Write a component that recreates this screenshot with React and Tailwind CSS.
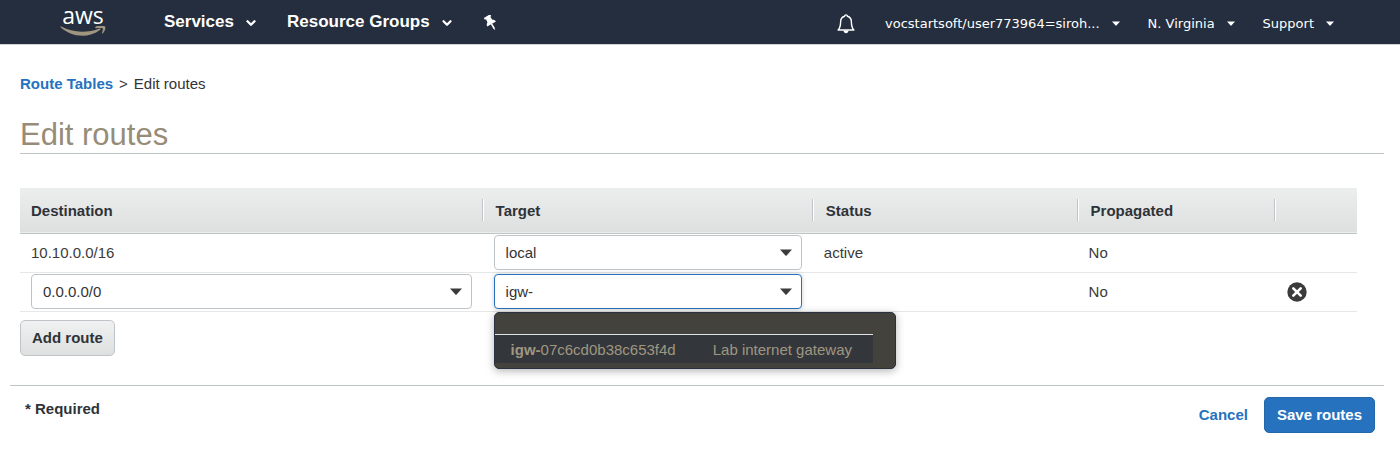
import React, { useState } from "react";
import { ChevronDown } from "lucide-react";

function Caret({ className }) {
  return (
    <svg viewBox="0 0 12 7" className={className} fill="currentColor" aria-hidden="true">
      <path d="M0 .5h12L6.6 6.6a.9.9 0 0 1-1.2 0z" />
    </svg>
  );
}

function Logo() {
  return (
    <a href="#home" aria-label="aws" className="flex w-12 flex-col items-center text-white">
      <span className="font-['Open_Sans','Noto_Sans',sans-serif] text-[23px] leading-4 font-medium">aws</span>
      <svg viewBox="0 0 46 12" className="mt-[3px] h-3 w-12 text-[#a09680]" fill="currentColor" aria-hidden="true">
        <path d="M.6 1.3C.2.900.700.200 1.300.600 7.500 4 14.500 5.800 22 5.800c6 0 12-1.100 17.500-3.200.9-.3 1.500.600.7 1.200C35 7.800 28.500 9.800 22.500 9.800 14 9.800 6.500 6.600.6 1.300z" />
        <path d="M35.600.700C38-.6 43.500-.6 45 .400c1.100 1-.1 5.200-2.400 7-.5.400-1 .1-.7-.5.700-1.500 1.300-3.600.8-4.400-.600-.700-3.800-.5-6.700-.3-.8.100-1.100-1-.4-1.500z" />
      </svg>
    </a>
  );
}

function PrimaryMenu({ children }) {
  return (
    <button type="button" className="flex items-center gap-[10px] text-[17px] leading-5 font-bold">
      {children}
      <ChevronDown size={14} strokeWidth={4} className="mt-[3px]" aria-hidden="true" />
    </button>
  );
}

function SecondaryMenu({ children }) {
  return (
    <button type="button" className="flex items-center gap-3 font-['DejaVu_Sans',sans-serif] text-[13px] leading-5">
      {children}
      <Caret className="h-[5px] w-2" />
    </button>
  );
}

function Header() {
  return (
    <header className="flex h-11 items-center bg-[#242e3e] pr-[66px] pl-[59px] text-white">
      <Logo />
      <nav className="ml-[57px] flex items-center gap-[29px] pb-px">
        <PrimaryMenu>Services</PrimaryMenu>
        <PrimaryMenu>Resource Groups</PrimaryMenu>
        <button type="button" aria-label="Pin shortcuts" className="pt-[3px]">
          <svg viewBox="0 0 16 16" className="size-4" fill="currentColor" aria-hidden="true">
            <g transform="rotate(-30 8 8)">
              <path d="M4.300 0h7.400v2.200h-1.300l.4 3.600c1.400.6 2.200 1.700 2.200 3.400H3c0-1.700.8-2.800 2.200-3.400l.4-3.600H4.300z" />
              <path d="M7.200 9h1.600v4.500L8 16.500l-.8-3z" />
            </g>
          </svg>
        </button>
      </nav>
      <div className="ml-auto flex items-center gap-7 pt-[3px]">
        <button type="button" aria-label="Notifications" className="mr-[2px]">
          <svg viewBox="0 0 18 20" className="h-5 w-[18px]" fill="none" stroke="currentColor" strokeWidth="1.4" strokeLinejoin="round" aria-hidden="true">
            <path d="M7.600 2.300c0-1.900 2.800-1.900 2.800 0 2.700.7 4 2.900 4 5.700 0 4.400.8 6.200 2.500 8H1.100c1.700-1.800 2.500-3.600 2.500-8 0-2.800 1.300-5 4-5.700z" />
            <path d="M6.500 16.500c.2 3.700 4.800 3.700 5 0z" fill="currentColor" stroke="none" />
          </svg>
        </button>
        <SecondaryMenu>vocstartsoft/user773964=siroh...</SecondaryMenu>
        <SecondaryMenu>N. Virginia</SecondaryMenu>
        <SecondaryMenu>Support</SecondaryMenu>
      </div>
    </header>
  );
}

function SelectBox({ label, options }) {
  return (
    <div className="relative">
      <select
        aria-label={label}
        className="block h-[35px] w-full appearance-none rounded border border-[#bfc4c9] bg-white px-[11px] text-[15px] text-[#333333]"
      >
        {options.map((option) => (
          <option key={option}>{option}</option>
        ))}
      </select>
      <Caret className="pointer-events-none absolute top-[14px] right-[10px] h-[7px] w-3 text-[#3b3b3b]" />
    </div>
  );
}

function GatewayCombobox() {
  const [value, setValue] = useState("igw-");
  return (
    <div className="relative">
      <input
        type="text"
        role="combobox"
        aria-label="Target for 0.0.0.0/0"
        aria-expanded="true"
        aria-controls="gateway-options"
        value={value}
        onChange={(event) => setValue(event.target.value)}
        className="block h-[35px] w-full rounded border border-[#2672bf] bg-white px-[11px] text-[15px] text-[#333333] shadow-[0_0_5px_rgba(0,0,0,0.2)] outline-none"
      />
      <Caret className="pointer-events-none absolute top-[14px] right-[10px] h-[7px] w-3 text-[#3b3b3b]" />
      <div className="absolute top-full left-0 z-10 mt-[3px] w-[402px] rounded-[5px] border border-[#2b3140] bg-[#44423d] pt-[21px] pr-[22px] pb-[5px] shadow-[0_2px_8px_rgba(0,0,0,0.3)]">
        <ul id="gateway-options" role="listbox" aria-label="Internet gateways" className="border-t border-[#dfe2e6]">
          <li
            role="option"
            aria-selected="false"
            className="flex h-7 items-center gap-[37px] bg-[#33373c] pt-px pl-4 text-[15px] whitespace-nowrap text-[#a09680]"
          >
            <span>
              <b>igw-</b>07c6cd0b38c653f4d
            </span>
            <span>Lab internet gateway</span>
          </li>
        </ul>
      </div>
    </div>
  );
}

function HeadCell({ className, children }) {
  return (
    <th scope="col" className={`p-0 text-left font-bold ${className}`}>
      <div className="flex h-[22px] items-center border-r border-[#bfc4c9] pt-px shadow-[1px_0_0_#ffffff]">{children}</div>
    </th>
  );
}

function RoutesTable() {
  return (
    <table className="w-full table-fixed border-collapse text-[15px] leading-5">
      <thead>
        <tr className="h-[45px] border-b border-[#bfc4c4] bg-linear-to-b from-[#eceeee] to-[#dee0e0] text-[#2f3338]">
          <HeadCell className="w-[34.6%] pl-[11px]">Destination</HeadCell>
          <HeadCell className="w-[24.7%] pl-[13px]">Target</HeadCell>
          <HeadCell className="w-[19.8%] pl-[13px]">Status</HeadCell>
          <HeadCell className="w-[14.8%] pl-[13px]">Propagated</HeadCell>
          <th scope="col" aria-label="Actions" />
        </tr>
      </thead>
      <tbody className="text-[#3b3b3b]">
        <tr className="h-[39px] border-b border-[#e6e8e8]">
          <td className="px-[11px]">10.10.0.0/16</td>
          <td className="px-[11px]">
            <SelectBox label="Target for 10.10.0.0/16" options={["local"]} />
          </td>
          <td className="px-[11px]">active</td>
          <td className="px-[11px]">No</td>
          <td />
        </tr>
        <tr className="h-[39px] border-b border-[#e6e8e8]">
          <td className="px-[11px]">
            <SelectBox label="Destination" options={["0.0.0.0/0"]} />
          </td>
          <td className="px-[11px]">
            <GatewayCombobox />
          </td>
          <td />
          <td className="px-[11px]">No</td>
          <td className="px-3">
            <button type="button" aria-label="Remove route" className="block">
              <svg viewBox="0 0 20 20" className="size-5" aria-hidden="true">
                <circle cx="10" cy="10" r="9.700" fill="#3b3b3b" />
                <path d="M6.300 6.300l7.400 7.400M13.700 6.300l-7.400 7.400" stroke="#ffffff" strokeWidth="2.600" strokeLinecap="round" />
              </svg>
            </button>
          </td>
        </tr>
      </tbody>
    </table>
  );
}

export default function App() {
  return (
    <div className="bg-white font-['Liberation_Sans',Arial,sans-serif] text-[15px] text-[#333333]">
      <Header />
      <main>
        <div className="border-t border-[#cfd3d6] pt-[29px] pr-4 pl-5">
          <nav aria-label="Breadcrumb" className="flex gap-[6px] leading-5">
            <a href="#route-tables" className="font-bold text-[#2672bf]">Route Tables</a>
            <span>&gt;</span>
            <span>Edit routes</span>
          </nav>
          <h1 className="mt-[23px] border-b border-[#bfc4c4] text-[31px] leading-9 text-[#978c78]">Edit routes</h1>
          <div className="mt-[34px] pr-[27px]">
            <RoutesTable />
          </div>
          <button
            type="button"
            className="mt-2 h-9 rounded-[5px] border border-[#bfc4c9] bg-linear-to-b from-[#f0f1f1] to-[#dee0e0] px-[11px] pt-px font-bold text-[#2f3338]"
          >
            Add route
          </button>
        </div>
        <footer className="mt-[29px] mr-4 ml-[10px] flex justify-between border-t border-[#bfc4c4] pt-[11px] pr-[9px] pl-[15px] font-bold">
          <p className="pt-[2px] leading-5 text-[#2f3338]">* Required</p>
          <div className="flex items-center gap-4">
            <a href="#cancel" className="pt-px text-[#2672bf]">Cancel</a>
            <button type="button" className="h-9 rounded-[5px] border border-[#2567ab] bg-[#2672bf] px-3 pt-px text-white">
              Save routes
            </button>
          </div>
        </footer>
      </main>
    </div>
  );
}
